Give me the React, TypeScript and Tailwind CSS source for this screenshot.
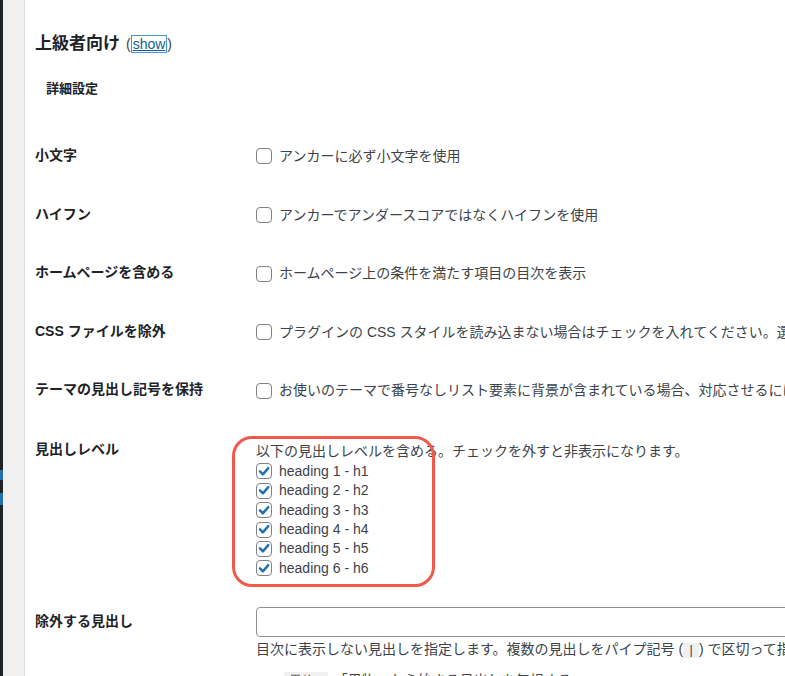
import React from "react";

const font = "font-['Liberation_Sans','Noto_Sans_CJK_JP',sans-serif]";

function Box({ checked = false }: { checked?: boolean }) {
  return (
    <span className="inline-flex h-4 w-4 shrink-0 items-center justify-center rounded-[4px] border border-[#7e8186] bg-white">
      {checked && (
        <svg viewBox="0 0 16 16" className="h-[15px] w-[15px]">
          <path d="M3.4 7.9 L6.7 11.3 L12.9 4.1" fill="none" stroke="#2271b1" strokeWidth="2.8" strokeLinecap="round" strokeLinejoin="round" />
        </svg>
      )}
    </span>
  );
}

const rows = [
  { label: "小文字", text: "アンカーに必ず小文字を使用" },
  { label: "ハイフン", text: "アンカーでアンダースコアではなくハイフンを使用" },
  { label: "ホームページを含める", text: "ホームページ上の条件を満たす項目の目次を表示" },
  { label: "CSS ファイルを除外", text: "プラグインの CSS スタイルを読み込まない場合はチェックを入れてください。選択すると目次のスタイルは適用されません。" },
  { label: "テーマの見出し記号を保持", text: "お使いのテーマで番号なしリスト要素に背景が含まれている場合、対応させるにはチェックを入れてください。" },
];

export default function App() {
  return (
    <div className={`flex h-[676px] w-[785px] overflow-hidden bg-white ${font}`}>
      {/* admin menu edge */}
      <div className="flex w-[3px] shrink-0 flex-col bg-[#1d2327]">
        <div className="mt-[470px] h-[10px] bg-[#2271b1]" />
        <div className="mt-[13px] h-[12px] bg-[#2271b1]" />
      </div>
      <div className="w-[22px] shrink-0 border-r border-[#dcdcde] bg-[#f0f0f1]" />

      <div className="min-w-0 flex-1 pl-[10px] text-[14px] text-[#3c434a]">
        {/* Header */}
        <h3 className="mt-[32px] flex h-[24px] items-center whitespace-nowrap text-[17px] font-semibold text-[#1d2327]">
          上級者向け
          <span className="ml-[6px] text-[14px] font-normal text-[#3c434a]">
            (<span className="border border-[#4f94d4] px-[1px] text-[#135e96] underline decoration-[#135e96]">show</span>)
          </span>
        </h3>
        <p className="ml-[11px] mt-[24px] h-[18px] text-[13px] font-semibold leading-[18px] text-[#1d2327]">詳細設定</p>

        <div className="mt-[28.7px]">
          {rows.map((r) => (
            <div key={r.label} className="flex h-[58.6px] items-center">
              <div className="w-[221px] shrink-0 pb-[1px] text-[14px] font-semibold text-[#1d2327]">{r.label}</div>
              <label className="flex items-center gap-[7px] whitespace-nowrap pt-[1px]">
                <Box />
                <span>{r.text}</span>
              </label>
            </div>
          ))}

          {/* Heading levels */}
          <div className="flex h-[172px] items-start">
            <div className="w-[221px] shrink-0 pt-[20px] text-[14px] font-semibold leading-[19px] text-[#1d2327]">見出しレベル</div>
            <div className="relative pt-[21px]">
              <div className="pointer-events-none absolute left-[-24px] top-[16px] h-[151px] w-[203px] rounded-[20px] border-[3.5px] border-[#f05a4a]" />
              <p className="h-[20px] whitespace-nowrap leading-[20px]">以下の見出しレベルを含める。チェックを外すと非表示になります。</p>
              <div className="mt-[1px] flex flex-col">
                {[1, 2, 3, 4, 5, 6].map((n) => (
                  <label key={n} className="flex h-[19.4px] items-center gap-[7px] whitespace-nowrap">
                    <Box checked />
                    <span>heading {n} - h{n}</span>
                  </label>
                ))}
              </div>
            </div>
          </div>

          {/* Exclude headings */}
          <div className="flex items-start">
            <div className="w-[221px] shrink-0 pt-[20px] text-[14px] font-semibold leading-[19px] text-[#1d2327]">除外する見出し</div>
            <div className="min-w-0 flex-1 pt-[15px]">
              <input type="text" className="block h-[30px] w-[600px] rounded-[4px] border border-[#8c8f94] bg-white px-2" />
              <p className="mt-[2px] h-[20px] whitespace-nowrap leading-[20px]">
                目次に表示しない見出しを指定します。複数の見出しをパイプ記号 (
                <code className="bg-[#f0f0f1] px-[4px] font-['Liberation_Mono',monospace] text-[13px]">|</code>
                ) で区切って指定してください。
              </p>
              <ul className="ml-[28px] mt-[11px] whitespace-nowrap leading-[20px]">
                <li>
                  <code className="bg-[#f0f0f1] px-[5px] py-[2px] text-[13px]">果物*</code>
                  <span className="ml-[6px]">「果物」から始まる見出しを無視する</span>
                </li>
              </ul>
            </div>
          </div>
        </div>
      </div>
    </div>
  );
}
